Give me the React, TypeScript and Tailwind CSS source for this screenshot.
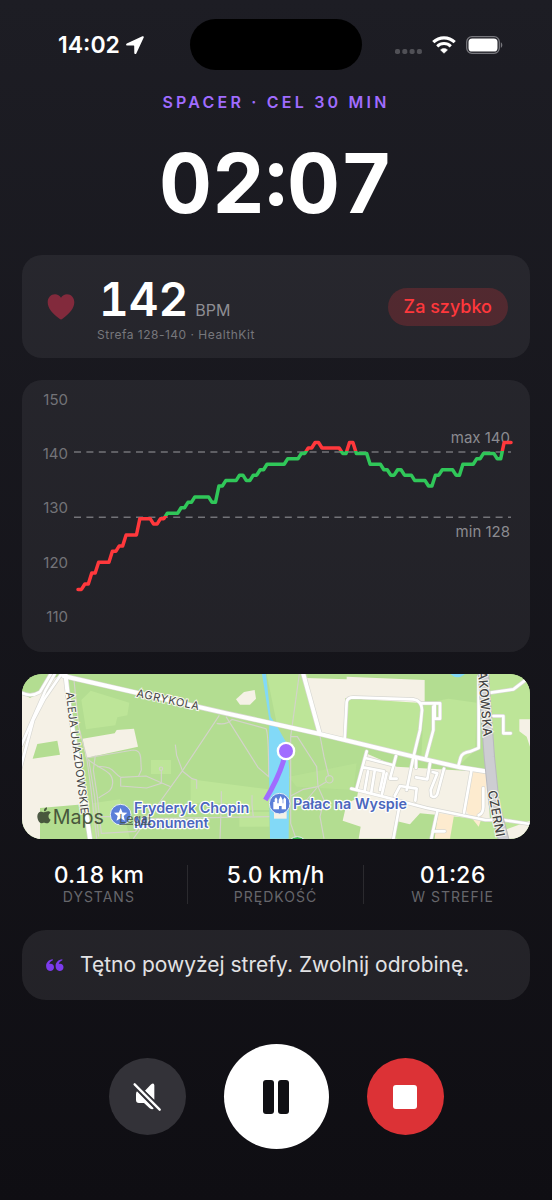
// App.tsx
// Walk session screen: timer, heart rate, zone chart, map and controls

import { useState } from 'react';

interface Stat {
  value: string;
  label: string;
}

const STATS: Stat[] = [
  { value: '0.18 km', label: 'DYSTANS' },
  { value: '5.0 km/h', label: 'PRĘDKOŚĆ' },
  { value: '01:26', label: 'W STREFIE' },
];

// Heart rate samples, one per second, stored as [bpm, seconds]
const HEART_RATE_RUNS: [number, number][] = [
  [115, 2], [116, 2], [118, 2], [120, 4], [122, 2], [123, 2], [125, 4], [128, 4],
  [127, 2], [128, 2], [129, 4], [130, 2], [131, 2], [132, 5], [131, 2], [134, 2],
  [135, 4], [136, 2], [135, 2], [136, 2], [137, 2], [138, 6], [139, 4], [140, 2],
  [141, 2], [142, 2], [141, 6], [140, 2], [142, 2], [140, 4], [138, 4], [137, 2],
  [136, 2], [137, 2], [136, 3], [135, 4], [134, 2], [136, 2], [137, 4], [136, 2],
  [138, 4], [139, 2], [140, 4], [139, 2], [142, 3],
];

const TICKS = [150, 140, 130, 120, 110];

const samples = HEART_RATE_RUNS.flatMap(([bpm, count]) => Array<number>(count).fill(bpm));

const xAt = (i: number) => 56 + (i * 433) / (samples.length - 1);
const yAt = (bpm: number) => 19 + (150 - bpm) * 5.44;

function StatusBar() {
  return (
    <header className="grid grid-cols-[1fr_auto_1fr] items-center pt-[19px]">
      <div className="flex items-center justify-center gap-[6px] pl-3">
        <span className="text-[23px] leading-6 font-semibold">14:02</span>
        <svg className="h-[18px] w-[18px]" viewBox="0 0 18 18" aria-hidden="true">
          <path
            d="M16.4.3.8 7.400c-1.100.5-.8 2 .4 2l6.500.1c.3 0 .5.2.5.5l.1 6.900c0 1.300 1.500 1.500 2 .5L17.700 1.600c.4-.9-.4-1.600-1.300-1.300Z"
            fill="#fff"
          />
        </svg>
      </div>
      <div className="h-[51px] w-[172px] rounded-full bg-black" />
      <div className="flex items-center justify-center gap-[10px] pr-4">
        <svg className="h-[18px] w-[27px]" viewBox="0 0 27 18" fill="#505056" aria-hidden="true">
          <rect x="0" y="13" width="5" height="5" rx="1.800" />
          <rect x="7.300" y="13" width="5" height="5" rx="1.800" />
          <rect x="14.600" y="13" width="5" height="5" rx="1.800" />
          <rect x="21.900" y="13" width="5" height="5" rx="1.800" />
        </svg>
        <svg className="h-[18px] w-6" viewBox="0 0 24 18" fill="none" stroke="#fff" aria-hidden="true">
          <path d="M1.300 6.200a15.500 15.500 0 0 1 21.400 0" strokeWidth="3.200" />
          <path d="M5.200 10.300a9.800 9.800 0 0 1 13.600 0" strokeWidth="3" />
          <path d="M12 17.300 8.500 13.900a5 5 0 0 1 7 0Z" fill="#fff" strokeWidth=".5" />
        </svg>
        <svg className="h-[18px] w-[37px]" viewBox="0 0 37 18" aria-hidden="true">
          <rect x=".7" y=".7" width="32.600" height="16.600" rx="5.200" fill="none" stroke="#77777d" strokeWidth="1.300" />
          <rect x="2.500" y="2.500" width="29" height="13" rx="3.600" fill="#fff" />
          <path d="M34.800 6.200c2 .9 2 4.700 0 5.600Z" fill="#77777d" />
        </svg>
      </div>
    </header>
  );
}

function HeartRateCard() {
  return (
    <section className="flex h-[103px] items-center rounded-[20px] bg-white/[0.06] pr-[22px] pl-[25px]">
      <svg className="h-[27px] w-[28px] shrink-0" viewBox="0 0 28 27" aria-hidden="true">
        <path
          d="M14 26.500c-.4 0-1-.3-1.500-.7C5.300 20.600.7 15.200.7 9.300.7 4.500 3.900 1.200 8 1.200c2.600 0 4.700 1.400 6 3.600 1.300-2.200 3.400-3.600 6-3.600 4.100 0 7.300 3.300 7.300 8.100 0 5.900-4.600 11.300-11.800 16.500-.5.4-1.100.7-1.500.7Z"
          fill="#822a3c"
        />
      </svg>
      <div className="ml-[22px] flex flex-1 flex-col gap-[3px] pt-1">
        <div className="flex items-baseline gap-[7px] pl-[2px]">
          <span className="text-[46px] leading-[50px] font-semibold tabular-nums">142</span>
          <span className="text-base text-[#8e8e93]">BPM</span>
        </div>
        <p className="text-xs leading-4 tracking-[0.5px] text-[#77777c]">Strefa 128-140 · HealthKit</p>
      </div>
      <span className="rounded-full bg-[#ff383c]/20 px-4 py-[7px] text-[18px] leading-6 font-medium text-[#ff383c]">
        Za szybko
      </span>
    </section>
  );
}

function ZoneChart() {
  const points = samples.map((bpm, i) => `${xAt(i)},${yAt(bpm)}`).join(' ');

  return (
    <section className="rounded-[20px] bg-white/[0.06]">
      <svg className="block w-full" viewBox="0 0 508 272" role="img" aria-label="Tętno w czasie">
        <defs>
          {/* Everything above max and below min is drawn red */}
          <clipPath id="out-of-zone">
            <rect x="0" y="0" width="508" height="71" />
            <rect x="0" y="136" width="508" height="136" />
          </clipPath>
          <clipPath id="in-zone">
            <rect x="0" y="71" width="508" height="65" />
          </clipPath>
        </defs>
        <g fill="#737378" fontSize="15" textAnchor="end">
          {TICKS.map((tick) => (
            <text key={tick} x="46" y={yAt(tick) + 5.5}>
              {tick}
            </text>
          ))}
        </g>
        <g stroke="#737378" strokeWidth="1.500" strokeDasharray="7 5.400">
          <path d="M52 72H489" />
          <path d="M52 137.300H489" />
        </g>
        <g fill="#8b8b90" fontSize="15" textAnchor="end">
          <text x="488" y="63">max 140</text>
          <text x="488" y="157">min 128</text>
        </g>
        <g fill="none" strokeWidth="3.500" strokeLinecap="round" strokeLinejoin="round">
          <polyline points={points} stroke="#30c759" clipPath="url(#in-zone)" />
          <polyline points={points} stroke="#ff383c" clipPath="url(#out-of-zone)" />
        </g>
      </svg>
    </section>
  );
}

function RouteMap() {
  return (
    <section className="overflow-hidden rounded-[20px]">
      <svg className="block w-full" viewBox="6 12 1524 495" role="img" aria-label="Mapa trasy">
        <rect x="0" y="0" width="1540" height="520" fill="#b3dd91" />

        {/* Lighter lawns */}
        <g fill="#bde598">
          <path d="M212 62 328 98 322 136 292 142 286 166 198 178 184 90Z" />
          <path d="M393 270H453V312H393Z" />
          <path d="M512 328 748 358V420H640V400H512Z" />
          <path d="M216 400 300 388 330 506H216Z" />
          <path d="M658 426H748V470H658Z" />
          <path d="M740 12H862L898 190 770 160Z" />
          <path d="M806 320 1010 280 1000 360 830 350Z" opacity=".5" />
          <path d="M976 90H1180L1212 110 1186 262 974 210Z" />
          <path d="M1212 100 1285 86 1370 98 1366 240 1320 284 1204 262Z" />
          <path d="M1408 12H1530V480L1456 478 1420 330Z" />
          <path d="M1300 430 1450 452 1470 506H1290Z" />
        </g>

        {/* Built-up blocks */}
        <g fill="#f5f1e6">
          <path d="M0 70 130 12 160 220 190 404 60 420V520H0Z" />
          <path d="M188 206 284 190 290 180 342 176 354 230 198 264Z" />
          <path d="M648 88 672 66 704 60 708 86 690 104 660 104Z" />
          <path d="M858 24 980 28V20L1214 30V100L976 84 974 210 900 192Z" />
          <path d="M1038 250 1130 290 1400 306 1410 450 1200 430 1130 506 1110 506 1016 506 1022 470 968 452 980 400 1010 386Z" />
          <path d="M1498 148H1530V230L1520 200 1498 184Z" />
          <path d="M1460 478 1530 452V506H1466Z" />
        </g>
        <path d="M1126 452 1200 470 1190 506H1116Z" fill="#b3dd91" />
        <g fill="#fdebcf">
          <path d="M1360 306H1398V360L1390 430 1376 470 1336 420Z" />
          <path d="M1254 430 1302 436 1290 506H1244Z" />
        </g>
        <path d="M0 12H92L64 66 30 84 6 70Z" fill="#b3dd91" />
        <path d="M52 222 112 212 120 254 38 266Z" fill="#b3dd91" />
        <path d="M60 414 200 402V506H60Z" fill="#b3dd91" />

        {/* Water */}
        <g fill="#82d9f7">
          <path d="M726 12H738L752 140 772 170 800 220 808 300 806 506H750L746 250 748 150Z" />
          <circle cx="1313" cy="-6" r="28" />
        </g>
        <path d="M762 426H800V446H762Z" fill="#f5f1e6" />

        {/* Footpaths */}
        <g fill="none" stroke="#d3d3ca" strokeWidth="3.500">
          <path d="M162 30 176 170 200 262 212 350 230 506" />
          <path d="M200 264 340 240Q360 240 362 262L364 300 356 318" />
          <path d="M204 268C240 300 280 300 278 340 276 370 250 370 236 384" />
          <path d="M232 290C280 286 280 310 302 322L378 318 424 338 452 350" />
          <path d="M302 324V348L380 354 424 340V300" />
          <circle cx="423" cy="296" r="5" />
          <path d="M598 136 486 304 424 390 340 506" />
          <path d="M466 224 470 256 488 304 516 326 530 330V356" />
          <path d="M590 160Q620 166 636 148L738 176Q746 190 746 320L714 292 618 140" />
          <path d="M226 256 220 300 232 380 244 490 346 484 380 446 748 440" />
          <path d="M206 268 224 380 236 500M236 440 300 440" />
          <path d="M604 364V400L600 506M696 376V404L700 440" />
          <path d="M838 12 812 200V460L828 506M812 200H832L890 290 894 350 912 390 900 440 912 506" />
          <path d="M900 198 912 260 926 318" />
          <circle cx="928" cy="328" r="11" />
          <path d="M812 378 850 358 894 350 918 336M890 354 860 390" />
        </g>

        {/* Streets: grey casing under white */}
        {['#d8d8d3', '#ffffff'].map((color, layer) => (
          <g key={color} fill="none" stroke={color} strokeLinejoin="round" strokeLinecap="round">
            <g strokeWidth={layer === 0 ? 16 : 12}>
              <path d="M130 18 340 66 620 130 900 192 1190 262 1320 292 1396 304" />
              <path d="M136 12 150 130 184 330 212 520" />
              <path d="M850 12 898 186" />
            </g>
            <g strokeWidth={layer === 0 ? 12 : 8}>
              <path d="M124 12 72 88 40 150 0 300" />
              <path d="M104 12 76 62 46 130 4 226" />
              <path d="M92 12 60 66Q30 84 0 66" />
              <path d="M974 208 980 96Q982 82 1000 82L1180 88Q1206 92 1206 120L1200 180 1180 262 1160 360" />
              <path d="M1206 100H1260V146H1244V106M1240 110V180L1218 262" />
              <path d="M1376 20V234L1352 244Q1326 248 1322 262L1316 284" />
              <path d="M1412 68 1480 58 1530 20M1420 138H1450V190H1472" />
              <path d="M994 356 1090 380 1220 414 1396 450 1450 450 1530 462" />
              <path d="M1040 244 1010 356M1030 292 1092 304 1080 360M1036 264 1120 286" />
              <path d="M1044 304 1034 362M1064 304 1054 366M1100 310 1086 372" />
              <path d="M1128 258 1110 326H1130" />
              <path d="M1188 262V294M1230 280 1222 328 1188 322" />
              <path d="M1272 296 1252 372Q1246 386 1234 378L1232 360 1252 310 1238 306" />
              <path d="M1354 304 1332 428" />
              <path d="M1124 378 1140 348 1190 356 1186 392M1140 400 1120 506" />
              <path d="M1252 424 1234 506M1238 484 1274 484M1390 354V410Q1390 430 1376 436" />
            </g>
          </g>
        ))}

        {/* Main avenue */}
        <path d="M1390 12 1408 260 1422 400 1454 520" fill="none" stroke="#b9b9be" strokeWidth="34" />
        <path d="M1390 12 1408 260 1422 400 1454 520" fill="none" stroke="#cdcdd2" strokeWidth="28" />

        {/* Recorded route */}
        <path d="M798 244Q784 310 736 390" fill="none" stroke="#a06cff" strokeWidth="15" />
        <circle cx="798" cy="243" r="28" fill="#fff" />
        <circle cx="798" cy="243" r="21" fill="#a06cff" />

        {/* Street names */}
        <g fill="#454545" stroke="#f7f7ef" strokeWidth="6" paintOrder="stroke" fontSize="33">
          <defs>
            <path id="street-agrykola" d="M348 80 560 126" />
            <path id="street-aleja" d="M137 68Q160 250 192 500" />
            <path id="street-akowska" d="M1374 4 1394 250" />
            <path id="street-czerni" d="M1403 364 1436 540" />
          </defs>
          <text letterSpacing="2">
            <textPath href="#street-agrykola">AGRYKOLA</textPath>
          </text>
          <text letterSpacing="1">
            <textPath href="#street-aleja">ALEJA UJAZDOWSKIE</textPath>
          </text>
          <g fontSize="37" fontWeight="500" letterSpacing="1">
            <text>
              <textPath href="#street-akowska">AKOWSKA</textPath>
            </text>
            <text>
              <textPath href="#street-czerni">CZERNI</textPath>
            </text>
          </g>
        </g>

        {/* Places */}
        <g stroke="#e6eef4" strokeWidth="3" fill="#5b7fd9">
          <circle cx="302" cy="434" r="31" />
          <circle cx="779" cy="401" r="31" />
          <circle cx="832" cy="530" r="30" fill="#38b64a" />
        </g>
        <path d="m302 414 5.500 13.500 14.500 1-11 9.500 3.500 14-12.500-7.500-12.500 7.500 3.500-14-11-9.500 14.500-1Z" fill="#fff" />
        <path
          d="M760 418V396H764V388L768 382 772 388V400H776V390L782 378 788 390V400H790V388L794 382 798 388V418H785V408H777V418Z"
          fill="#fff"
        />
        <g fill="#4c67bd" stroke="#fff" strokeWidth="7" strokeLinejoin="round" paintOrder="stroke" fontSize="43" fontWeight="600">
          <text x="342" y="428">Fryderyk Chopin</text>
          <text x="342" y="474">Monument</text>
          <text x="819" y="418">Pałac na Wyspie</text>
        </g>

        {/* Attribution */}
        <g fill="#3c4a34" opacity=".9">
          <path d="M72 424c-1-6 3-11 9-12 1 6-3 12-9 12Z" />
          <path d="M62 425c4 0 7 2 10 2s7-3 12-3c4 0 7 2 8 4-9 5-8 17 0 21-3 7-7 11-12 11-3 0-5-2-8-2s-5 2-8 2c-6 0-12-11-12-21 0-9 5-14 10-14Z" />
          <text x="98" y="461" fontSize="59">Maps</text>
        </g>
        <text x="298" y="458" fontSize="37" fill="#3a4a3a" opacity=".75" textDecoration="underline">
          Legal
        </text>
      </svg>
    </section>
  );
}

function StatsRow() {
  return (
    <dl className="-mx-[11px] mt-1 grid grid-cols-3 divide-x divide-white/10">
      {STATS.map((stat) => (
        <div key={stat.label} className="flex flex-col-reverse items-center gap-[5px]">
          <dt className="text-sm leading-[14px] tracking-[1px] text-[#66666b]">{stat.label}</dt>
          <dd className="text-[23px] leading-5 font-medium tabular-nums">{stat.value}</dd>
        </div>
      ))}
    </dl>
  );
}

function Controls() {
  const [muted, setMuted] = useState(true);

  return (
    <div className="mt-[22px] flex items-center justify-center gap-[38px]">
      <button
        type="button"
        aria-label="Dźwięk"
        aria-pressed={muted}
        onClick={() => setMuted(!muted)}
        className="flex size-[77px] items-center justify-center rounded-full bg-[#333238]"
      >
        <svg className="size-7" viewBox="0 0 84 84" aria-hidden="true">
          <path d="M36 23 53 5Q63-3 64 7V50ZM12 25 62 76Q59 82 50 76L33 60H18Q9 60 9 51V34Q9 28 12 25Z" fill="#fff" />
          {muted && <path d="M5 4 80 80" stroke="#333238" strokeWidth="16" />}
          {muted && <path d="M5 4 80 80" stroke="#fff" strokeWidth="7" strokeLinecap="round" />}
        </svg>
      </button>
      <button
        type="button"
        aria-label="Pauza"
        className="flex size-[105px] items-center justify-center gap-1 rounded-full bg-white"
      >
        <span className="h-[34px] w-[11px] rounded-[3px] bg-[#101014]" />
        <span className="h-[34px] w-[11px] rounded-[3px] bg-[#101014]" />
      </button>
      <button
        type="button"
        aria-label="Zakończ"
        className="flex size-[77px] items-center justify-center rounded-full bg-[#dc3236]"
      >
        <span className="size-6 rounded-[3px] bg-white" />
      </button>
    </div>
  );
}

export default function App() {
  return (
    <div className="min-h-screen bg-linear-to-b from-[#1d1d24] to-[#0f0e13] pb-[50px] font-['Inter',sans-serif] text-white">
      <StatusBar />
      <main className="flex flex-col px-[22px]">
        <p className="mt-5 text-center text-base leading-6 font-semibold tracking-[0.2em] text-[#a06cff]">
          SPACER · CEL 30 MIN
        </p>
        <h1 className="mt-7 mb-[29px] text-center text-[82px] leading-[84px] font-bold tabular-nums">02:07</h1>
        <div className="flex flex-col gap-[22px]">
          <HeartRateCard />
          <ZoneChart />
          <RouteMap />
          <StatsRow />
          <section className="mt-1 flex h-[70px] items-center gap-4 rounded-[24px] bg-white/[0.08] px-6">
            <svg className="h-3 w-[18px] shrink-0" viewBox="0 0 18 12" fill="#7c3bed" aria-hidden="true">
              <path d="M6.800.2C2.800.6.100 3.300.100 7c0 2.900 1.500 4.900 4 4.900 2.200 0 3.900-1.500 3.900-3.700 0-2-1.400-3.500-3.300-3.500-.6 0-1.100.1-1.500.4.500-1.800 1.800-3.100 3.700-3.800Z" />
              <path d="M16.300.2C12.300.6 9.600 3.300 9.600 7c0 2.900 1.500 4.900 4 4.900 2.200 0 3.900-1.500 3.900-3.700 0-2-1.400-3.500-3.300-3.500-.6 0-1.100.1-1.500.4.500-1.800 1.800-3.100 3.700-3.800Z" />
            </svg>
            <p className="text-[21px] leading-7 text-[#e2e2e4]">Tętno powyżej strefy. Zwolnij odrobinę.</p>
          </section>
          <Controls />
        </div>
      </main>
    </div>
  );
}
